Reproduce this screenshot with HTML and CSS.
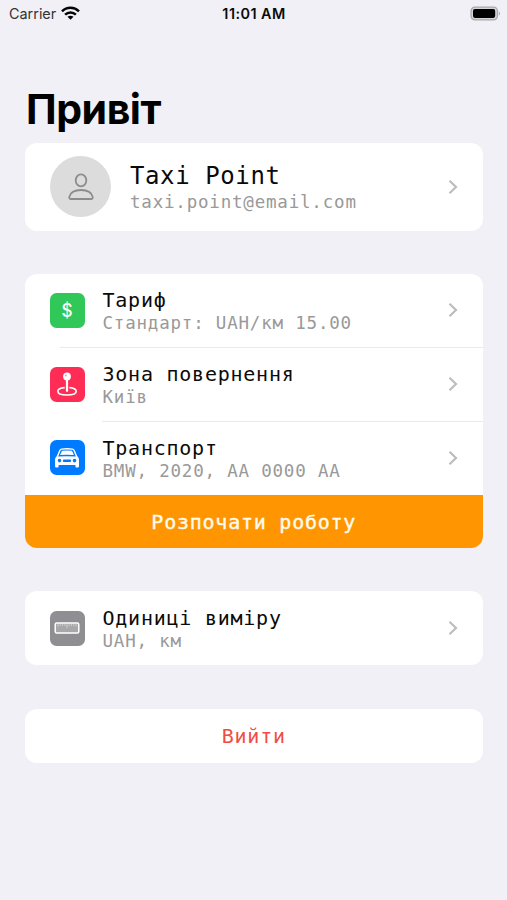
FILE: index.html
```html
<!DOCTYPE html>
<html lang="uk">
<head>
<meta charset="utf-8">
<meta name="viewport" content="width=device-width, initial-scale=1">
<title>Taxi Point</title>
<link rel="stylesheet" href="styles.css">
</head>
<body>
<header class="status">
  <div class="carrier"><span>Carrier</span>
    <svg class="wifi" viewBox="0 0 19 14"><g fill="none" stroke="#050505" stroke-width="2.5"><path d="M1 5.3C5.7.7 13.3.7 18 5.3"/><path d="M4.1 8.6C7.2 5.7 11.8 5.7 14.9 8.6"/></g><path d="M9.5 13.8 6.5 10.8C8.2 9.3 10.8 9.3 12.5 10.8Z" fill="#050505"/></svg>
  </div>
  <time class="clock">11:01 AM</time>
  <svg class="battery" viewBox="0 0 32 16"><rect x="1.1" y="1.1" width="26.3" height="12.8" rx="3.8" fill="#d5d5d8" stroke="#a9a9ac" stroke-width="1.3"/><rect x="3" y="3.1" width="22.2" height="8.8" rx="1.8" fill="#000"/><path d="M28.8 5.2Q31.2 7.5 28.8 9.8Z" fill="#a9a9ac"/></svg>
</header>
<main>
  <h1>Привіт</h1>
  <section class="card profile">
    <div class="avatar"><svg viewBox="0 0 26 28"><g fill="none" stroke="#8c8c8c" stroke-width="1.8"><ellipse cx="13" cy="7.4" rx="5.3" ry="6"/><path d="M3 26H23Q25 26 24.7 23.9C23.6 19.5 18.8 17 13 17S2.4 19.5 1.3 23.9Q1 26 3 26Z"/></g></svg></div>
    <div class="text"><p class="name">Taxi Point</p><p class="sub">taxi.point@email.com</p></div>
    <svg class="chevron" viewBox="0 0 10 16"><path d="M1.5 1.7 8 8 1.5 14.3"/></svg>
  </section>

  <section class="card group">
    <div class="row">
      <div class="icon green"><span>$</span></div>
      <div class="text"><p class="title">Тариф</p><p class="sub">Стандарт: UAH/км 15.00</p></div>
      <svg class="chevron" viewBox="0 0 10 16"><path d="M1.5 1.7 8 8 1.5 14.3"/></svg>
    </div>
    <div class="row line-wide">
      <div class="icon red"><svg viewBox="0 0 34 34"><path d="M14.7 20.6C10.6 20.9 7.8 22.3 7.8 24.3 7.8 26.5 11.8 28 17 28S26.2 26.5 26.2 24.3C26.2 22.3 23.4 20.9 19.3 20.6" fill="none" stroke="#fff" stroke-width="1.6"/><path d="M17 11V23.8" stroke="#fff" stroke-width="2.2" stroke-linecap="round"/><circle cx="17" cy="9.5" r="3.9" fill="#fff"/><circle cx="15.9" cy="8.5" r="1" fill="#ff9aae"/></svg></div>
      <div class="text"><p class="title">Зона повернення</p><p class="sub">Київ</p></div>
      <svg class="chevron" viewBox="0 0 10 16"><path d="M1.5 1.7 8 8 1.5 14.3"/></svg>
    </div>
    <div class="row line-text">
      <div class="icon blue"><svg viewBox="0 0 34 34"><path fill="#fff" fill-rule="evenodd" d="M11.5 7.5Q17 6.7 22.5 7.5 24.2 7.8 24.9 9.4L27.2 14.9Q29 16.5 29 18.5V25.3Q29 26.6 27.8 26.6H26.6Q25.4 26.6 25.4 25.3V24H8.6V25.3Q8.6 26.6 7.4 26.6H6.2Q5 26.6 5 25.3V18.5Q5 16.5 6.8 14.9L9.1 9.4Q9.8 7.8 11.5 7.5ZM12 8.7Q10.8 8.8 10.4 9.9L8.2 15.5Q17 14.8 25.8 15.5L23.6 9.9Q23.2 8.8 22 8.7 17 8.1 12 8.7ZM9.5 17.8A1.8 1.8 0 1 0 9.5 21.4 1.8 1.8 0 1 0 9.5 17.8ZM24.5 17.8A1.8 1.8 0 1 0 24.5 21.4 1.8 1.8 0 1 0 24.5 17.8ZM14 18.5Q12.8 18.5 12.8 19.7T14 20.9H20Q21.2 20.9 21.2 19.7T20 18.5Z"/><path fill="#fff" d="M12 9.8Q17 9.3 22 9.8L23.9 14Q17 13.5 10.1 14Z"/></svg></div>
      <div class="text"><p class="title">Транспорт</p><p class="sub">BMW, 2020, AA 0000 AA</p></div>
      <svg class="chevron" viewBox="0 0 10 16"><path d="M1.5 1.7 8 8 1.5 14.3"/></svg>
    </div>
    <button class="start">Розпочати роботу</button>
  </section>

  <section class="card units">
    <div class="row">
      <div class="icon gray"><svg viewBox="0 0 34 34"><rect x="5.2" y="12" width="23.6" height="10" rx="1.6" fill="#a7a7aa" stroke="#fff" stroke-width="1.5"/><path d="M8 13.2V15.6M10.3 13.2V14.9M12.6 13.2V14.9M14.8 13.2V14.9M17 13.2V16.8M19.2 13.2V14.9M21.4 13.2V14.9M23.7 13.2V14.9M26 13.2V15.6" stroke="#d4d4d6" stroke-width="1"/></svg></div>
      <div class="text"><p class="title">Одиниці виміру</p><p class="sub">UAH, км</p></div>
      <svg class="chevron" viewBox="0 0 10 16"><path d="M1.5 1.7 8 8 1.5 14.3"/></svg>
    </div>
  </section>

  <button class="card logout">Вийти</button>
</main>
</body>
</html>
```
FILE: styles.css
```css
* { box-sizing: border-box; }
body { margin: 0; min-height: 900px; background: #f1f0f6; color: #0a0a0a; font-family: "DejaVu Sans Mono", monospace; }
h1, p { margin: 0; }
button { display: block; border: 0; padding: 0; font-family: inherit; font-size: 20px; letter-spacing: .76px; text-align: center; }

.status { display: grid; grid-template-columns: 1fr auto 1fr; align-items: center; height: 27px; padding: 0 5px 0 9px; font-family: Inter, sans-serif; font-size: 14.4px; }
.carrier { display: flex; align-items: center; gap: 5px; color: #333; }
.wifi { width: 19px; height: 14px; margin-top: -2px; }
.clock { font-weight: 600; font-size: 14.4px; letter-spacing: .45px; margin-right: 3px; }
.battery { width: 32px; height: 16px; justify-self: end; }

main { padding: 61px 24.5px 0 25px; }
h1 { height: 54.5px; padding-left: 1px; font: 700 41px/42px Inter, sans-serif; letter-spacing: -.45px; color: #000; }

.card { width: 100%; overflow: hidden; border-radius: 12px; background: #fff; }
.profile { display: flex; align-items: center; height: 88px; padding: 0 25px; }
.avatar { display: flex; align-items: center; justify-content: center; width: 61px; height: 61px; margin-right: 19px; border-radius: 50%; background: #dcdcdc; }
.avatar svg { width: 26px; height: 28px; }
.text { flex: 1; padding-top: 2px; white-space: nowrap; }
.name { font-size: 24px; line-height: 29px; letter-spacing: .6px; }
.title { font-size: 20px; line-height: 24px; letter-spacing: .76px; }
.sub { font-size: 17.5px; line-height: 22px; letter-spacing: .8px; color: #999; }
.chevron { width: 10px; height: 16px; fill: none; stroke: #bdbdbf; stroke-width: 2.2; }

.group { margin-top: 43px; }
.row { display: flex; align-items: center; height: 73.7px; padding: 0 25px 0 24.5px; }
.icon { display: flex; align-items: center; justify-content: center; width: 35px; height: 35px; margin-right: 18px; border-radius: 6.5px; }
.icon svg { width: 34px; height: 34px; }
.icon span { color: #fff; font: 500 19px/34px Inter, sans-serif; transform: scaleX(.9); padding-top: 1px; }
.green { background: #32c759; }
.red { background: #ff2d55; }
.blue { background: #007aff; }
.gray { background: #8e8e93; }
.line-wide { background: linear-gradient(#e9e9eb, #e9e9eb) 35px 0 / 100% 1px no-repeat; }
.line-text { background: linear-gradient(#e9e9eb, #e9e9eb) 77px 0 / 100% 1px no-repeat; }
.start { width: 100%; height: 53.4px; padding-top: 2px; background: #ff9500; color: #fffbed; -webkit-text-stroke: .4px #fffbed; }
.units { margin-top: 43.5px; }
.logout { height: 54px; margin-top: 43.5px; color: #f14c43; }
```
